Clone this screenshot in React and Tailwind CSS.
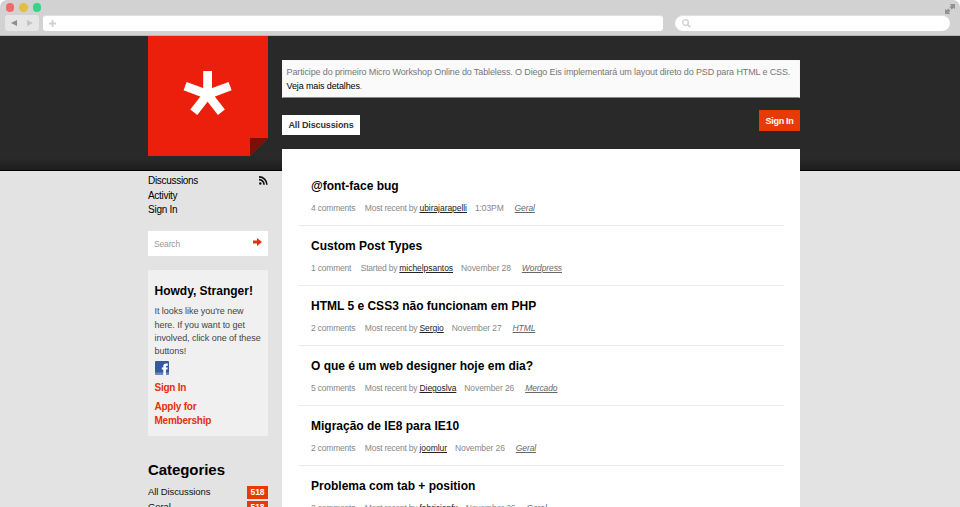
const topics = [
  { title: '@font-face bug', count: '4 comments', verb: 'Most recent by', user: 'ubirajarapelli', date: '1:03PM', cat: 'Geral' },
  { title: 'Custom Post Types', count: '1 comment', verb: 'Started by', user: 'michelpsantos', date: 'November 28', cat: 'Wordpress' },
  { title: 'HTML 5 e CSS3 não funcionam em PHP', count: '2 comments', verb: 'Most recent by', user: 'Sergio', date: 'November 27', cat: 'HTML' },
  { title: 'O que é um web designer hoje em dia?', count: '5 comments', verb: 'Most recent by', user: 'Diegoslva', date: 'November 26', cat: 'Mercado' },
  { title: 'Migração de IE8 para IE10', count: '2 comments', verb: 'Most recent by', user: 'joomlur', date: 'November 26', cat: 'Geral' },
  { title: 'Problema com tab + position', count: '2 comments', verb: 'Most recent by', user: 'fabricionfx', date: 'November 26', cat: 'Geral' },
];

function BrowserBar() {
  return (
    <div className="bg-white">
      <div className="flex h-9 flex-col rounded-t-[7px] border-b border-[#b5b5b5] bg-[#d2d2d2]">
        <div className="flex h-[15px] items-start justify-between pt-[3px] pr-[5px] pl-[5.5px]">
          <div className="flex gap-[5px]">
            <span className="size-[8.5px] rounded-full bg-[#ee6a66]" />
            <span className="size-[8.5px] rounded-full bg-[#e1bf41]" />
            <span className="size-[8.5px] rounded-full bg-[#35d488]" />
          </div>
          <svg width="10" height="10" viewBox="0 0 10 10" className="mt-[1px]" fill="#929292">
            <path d="M4.8 0H10V5.2L8.4 3.8 6.8 5.4 4.6 3.2 6.2 1.6ZM0 4.8 1.6 6.2 3.2 4.6 5.4 6.8 3.8 8.4 5.2 10H0Z" />
          </svg>
        </div>
        <div className="flex h-4 items-center pr-[10px] pl-[5px]">
          <div className="flex h-4 w-[33.5px] shrink-0 items-center justify-between rounded-[3px] bg-[#e6e6e6] px-[6px]">
            <svg width="6" height="6" viewBox="0 0 6 6"><path d="M0 3 6 0V6Z" fill="#8d8d8d" /></svg>
            <svg width="6" height="6" viewBox="0 0 6 6"><path d="M6 3 0 0V6Z" fill="#c3c3c3" /></svg>
          </div>
          <div className="ml-[4.5px] flex h-4 w-[620px] shrink-0 items-center rounded-[3px] border-t border-[#e0e0e0] bg-white pl-[6px]">
            <svg width="7" height="7" viewBox="0 0 7 7"><path d="M3.5 0V7M0 3.5H7" stroke="#d0d0d0" strokeWidth="1.8" /></svg>
          </div>
          <div className="ml-[12px] flex h-4 grow items-center rounded-full border-t border-[#e0e0e0] bg-white pl-[7px]">
            <svg width="9" height="9" viewBox="0 0 9 9" fill="none" stroke="#cfcfcf"><circle cx="3.5" cy="3.5" r="2.8" strokeWidth="1.3" /><path d="M5.5 5.5 8.3 8.2" strokeWidth="1.7" /></svg>
          </div>
        </div>
      </div>
    </div>
  );
}

function Logo() {
  return (
    <svg width="120" height="120" viewBox="0 0 120 120" className="block">
      <path d="M0 0H120V102L102 120H0Z" fill="#ec1f0c" />
      <path d="M102 102H120L102 120Z" fill="#7c0d07" />
      <g stroke="#fff" strokeWidth="8.8">
        <path d="M59.6 60V35" />
        <path d="M59.6 58.5 82.1 50.2" />
        <path d="M59.6 58.5 73.4 76.3" />
        <path d="M59.6 58.5 45.8 76.3" />
        <path d="M59.6 58.5 37.1 50.2" />
      </g>
    </svg>
  );
}

function Sidebar() {
  return (
    <aside className="w-[120px] shrink-0">
      <Logo />
      <nav className="mt-[18px] flex justify-between text-[10px] leading-[14.7px] tracking-[-0.3px] text-black">
        <ul>
          <li>Discussions</li>
          <li>Activity</li>
          <li className="tracking-[-0.25px]">Sign In</li>
        </ul>
        <svg width="9" height="9" viewBox="0 0 9 9" className="mt-[2px]" fill="none" stroke="#111" strokeWidth="1.6">
          <circle cx="1.3" cy="7.5" r="1.2" fill="#111" stroke="none" />
          <path d="M0 3.6A4.9 4.9 0 0 1 5 8.7M0 .9A7.8 7.8 0 0 1 7.9 8.7" />
        </svg>
      </nav>
      <div className="mt-[13px] flex h-[25px] items-center justify-between bg-white pr-[6px] pl-[6px]">
        <span className="mt-px text-[8.5px] tracking-[-0.15px] text-[#999]">Search</span>
        <svg width="9" height="8" viewBox="0 0 9 8" className="mb-[4px]"><path d="M0 2.4H4V0L9 4 4 8V5.6H0Z" fill="#e4310c" /></svg>
      </div>
      <section className="mt-[14px] h-[166px] bg-[#f0f0f0] px-[6.5px] pt-[13px]">
        <h4 className="text-[12px] leading-[17px] font-bold whitespace-nowrap text-black">Howdy, Stranger!</h4>
        <p className="mt-[5px] text-[9px] leading-[13.4px] tracking-[-0.05px] whitespace-nowrap text-[#444]">
          It looks like you're new<br />here. If you want to get<br />involved, click one of these<br />buttons!
        </p>
        <svg width="14" height="14" viewBox="0 0 14 14" className="mt-[2px] block">
          <rect width="14" height="14" rx="1" fill="#3558a3" />
          <rect y="11.5" width="14" height="2.5" fill="#6c88c0" />
          <path d="M8.3 14V8.6H6.8V6.4H8.3V5.2Q8.3 2.5 11 2.5H12.8V4.7H11.8Q10.9 4.7 10.9 5.6V6.4H12.7L12.4 8.6H10.9V14Z" fill="#fff" />
        </svg>
        <div className="mt-[6.5px] text-[10px] leading-[13.5px] font-bold tracking-[-0.23px] text-[#e4310c]">
          <p>Sign In</p>
          <p className="mt-[5.5px]">Apply for<br />Membership</p>
        </div>
      </section>
      <h3 className="mt-[25px] text-[15px] leading-[18px] font-bold tracking-[-0.06px] text-black">Categories</h3>
      <ul className="mt-[6px] text-[9.5px] tracking-[-0.1px] text-[#111]">
        {['All Discussions', 'Geral'].map((name) => (
          <li key={name} className="flex h-[15px] items-center justify-between">
            <span>{name}</span>
            <span className="h-[13.5px] w-[21px] bg-[#e83a04] text-center text-[8.5px] leading-[13px] font-bold tracking-normal text-white">518</span>
          </li>
        ))}
      </ul>
    </aside>
  );
}

function Topic({ topic }) {
  return (
    <li className="h-[60px] border-b border-[#ebebeb] pt-[12px] pl-[12.5px] whitespace-nowrap">
      <h3 className="text-[12px] leading-[16px] font-bold text-black">{topic.title}</h3>
      <div className="mt-[8px] flex text-[8.5px] leading-[13px] tracking-[-0.11px] text-[#888]">
        <span className="mr-[9.5px] tracking-[-0.2px]">{topic.count}</span>
        <span className="mr-[8px]"><span className="tracking-[-0.23px]">{topic.verb} </span><a className="tracking-[-0.05px] text-[#222] underline">{topic.user}</a></span>
        <span className="mr-[11px]">{topic.date}</span>
        <a className="text-[#666] italic underline">{topic.cat}</a>
      </div>
    </li>
  );
}

export default function App() {
  return (
    <div className="flex h-[507px] w-[960px] flex-col overflow-hidden font-['Liberation_Sans',Arial,sans-serif]">
      <BrowserBar />
      <div className="flex grow gap-[14px] overflow-hidden bg-[linear-gradient(#292929_0,#292929_122px,#1d1d1d_134px,#000_134px,#000_135px,#e3e3e3_135px)] pl-[148px]">
        <Sidebar />
        <main className="w-[518px] shrink-0 pt-6">
          <div className="h-[38px] border border-[#888] border-x-[#f5f5f5] border-t-[#f5f5f5] bg-[#fafafa] pt-[3.5px] pl-[3.5px] text-[9px] leading-[14.5px] tracking-[-0.125px] whitespace-nowrap text-[#777]">
            <p>Participe do primeiro Micro Workshop Online do Tableless. O Diego Eis implementará um layout direto do PSD para HTML e CSS.</p>
            <p className="text-black">Veja mais detalhes<span className="text-[#777]">.</span></p>
          </div>
          <div className="mt-3 flex h-[39px] items-start justify-between">
            <span className="mt-[5px] h-5 w-[78px] bg-white text-center text-[9px] leading-5 font-bold tracking-[-0.12px] text-[#333]">All Discussions</span>
            <span className="h-[21px] w-[41px] bg-[#e83a04] text-center text-[9px] leading-[22px] font-bold tracking-[-0.25px] text-white">Sign In</span>
          </div>
          <ul className="h-[400px] bg-white px-[16.5px] pt-[17px]">
            {topics.map((topic) => <Topic key={topic.title} topic={topic} />)}
          </ul>
        </main>
      </div>
    </div>
  );
}
